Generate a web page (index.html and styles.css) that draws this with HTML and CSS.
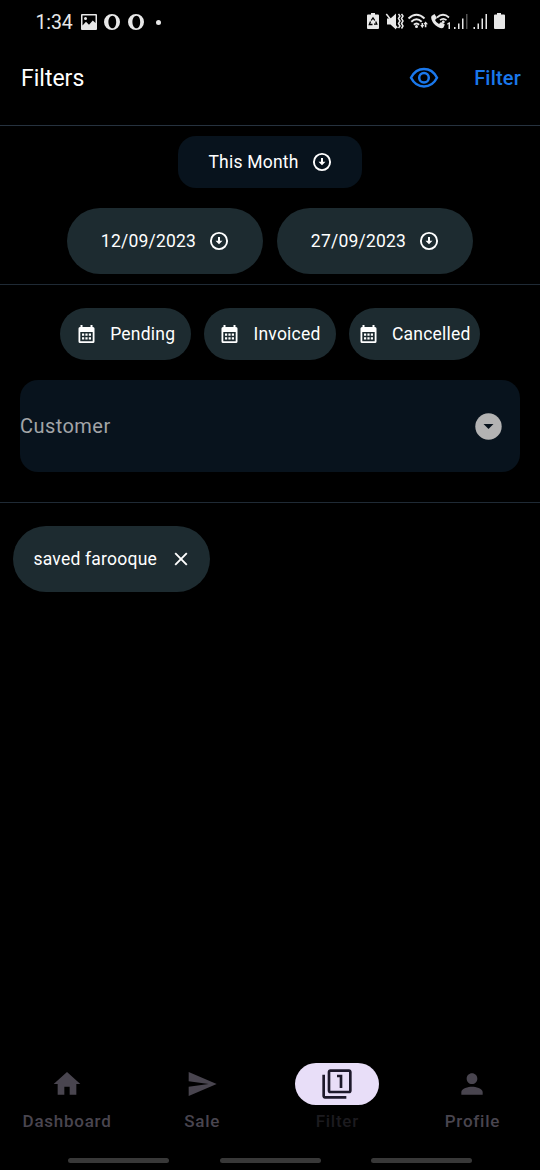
FILE: index.html
```html
<!DOCTYPE html>
<html lang="en">
<head>
<meta charset="utf-8">
<title>Filters</title>
<link rel="stylesheet" href="styles.css">
</head>
<body>
<svg class="defs" width="0" height="0">
  <symbol id="down" viewBox="0 0 20 20"><circle cx="10" cy="10" r="8.100" fill="none" stroke="currentColor" stroke-width="1.900"/><path d="M9 6h2v3.700h2.500L10 13.300 6.500 9.700H9z" fill="currentColor"/></symbol>
  <symbol id="calendar" viewBox="0 0 18 20"><path fill="currentColor" fill-rule="evenodd" d="M3 1h2v2h8V1h2v2h.5A1.500 1.500 0 0 1 17 4.500v13a1.500 1.500 0 0 1-1.500 1.500h-13A1.500 1.500 0 0 1 1 17.500v-13A1.500 1.500 0 0 1 2.500 3H3zM2.800 8v9.200h12.400V8z"/><path fill="currentColor" d="M4.500 9.500h2.200v2.200H4.500zM7.900 9.500h2.200v2.200H7.900zM11.300 9.500h2.200v2.200h-2.200zM4.500 13.200h2.200v2.200H4.500zM7.900 13.200h2.200v2.200H7.900zM11.300 13.200h2.200v2.200h-2.200z"/></symbol>
  <symbol id="opera" viewBox="0 0 16 16"><path fill="currentColor" fill-rule="evenodd" d="M8 0a8 8 0 1 0 0 16A8 8 0 1 0 8 0zM8.500 1.700c2.300 0 3.700 2.800 3.700 6.300s-1.400 6.300-3.700 6.300S4.400 11.500 4.400 8s1.800-6.300 4.100-6.300z"/></symbol>
</svg>
<div class="screen">
  <div class="status">
    <span class="time">1:34</span>
    <svg class="s-image" width="16" height="16" viewBox="0 0 16 16"><path fill="currentColor" fill-rule="evenodd" d="M1 0h14a1 1 0 0 1 1 1v14a1 1 0 0 1-1 1H1a1 1 0 0 1-1-1V1a1 1 0 0 1 1-1zM1.500 1.500v10L5 7.800l3 3 3.800-4.300 2.700 2.500V1.500zM4.500 3a1.500 1.500 0 1 1 0 3 1.500 1.500 0 0 1 0-3z"/></svg>
    <svg class="s-opera" width="16" height="16"><use href="#opera"/></svg>
    <svg class="s-opera" width="16" height="16"><use href="#opera"/></svg>
    <span class="dot"></span>
    <svg class="s-right" width="140" height="18" viewBox="0 0 140 18" fill="currentColor">
      <path d="M4 0h4v1.500h3a1 1 0 0 1 1 1V15a1 1 0 0 1-1 1H1a1 1 0 0 1-1-1V2.500a1 1 0 0 1 1-1h3z"/>
      <path d="M4.200 7.500 6 4.800l1.800 2.700M8.700 8.500l1.100 2.700H7M5.500 11.500H2.300l1.200-3" fill="none" stroke="#000" stroke-width="1.300"/>
      <path d="M20 5.500h3.500l5.500-5v16l-5.500-5H20z"/><path d="m19.300 1 11 14" stroke="currentColor" stroke-width="1.500"/>
      <path d="m31.500 1 1.500 2-1.500 2.500L33 8l-1.500 2.500L33 13l-1.500 2M34.500 1 36 3l-1.500 2.500L36 8l-1.500 2.500L36 13l-1.500 2.500" fill="none" stroke="currentColor" stroke-width="1.500"/>
      <g fill="none" stroke="currentColor" stroke-width="1.900"><path d="M41.500 5.500q8-7.500 16 0M44.300 8.800q5.200-5 10.400 0M46.900 11.700q2.600-2.500 5.200 0"/></g>
      <circle cx="49.500" cy="13.500" r="1.500"/><path d="M53.300 12h1.200v-2h1.500v2h1.200l-1.900 3.200zM58.600 8.500 61 11.300h-1.600v3h-1.600v-3h-1.500z"/>
      <path d="M64.500 3 67.500 1 70 5l-2 2q1 2.700 4 4l2-2 3.800 2.600-1.300 2.900q-1.500 1.600-5.500-.5-5-3-6.500-7.500-.7-2.500 0-3.500z"/>
      <path d="M70 4.500q6-5.500 12 0M73 7.200q3.300-2.700 6.500 0" fill="none" stroke="currentColor" stroke-width="1.700"/><circle cx="76.300" cy="9" r="1.400"/><path d="m80.200 10.500 2-1.200h.8V16h-1.500v-5l-1.300.7z"/>
      <path d="M87 14h1.500v2H87zM91 10.500h1.500V16H91zM95 5.500h1.500V16H95zM106.500 14h1.500v2h-1.500zM110.500 10.500h1.500V16h-1.500zM114.500 5.500h1.500V16h-1.500zM118.500 1h1.500v15h-1.500z"/><path d="M99 1h1.500v15H99z" opacity=".35"/>
      <path d="M130 0h4v1.500h3a1 1 0 0 1 1 1V15a1 1 0 0 1-1 1h-9a1 1 0 0 1-1-1V2.500a1 1 0 0 1 1-1h2z"/>
    </svg>
  </div>
  <header class="header">
    <h1>Filters</h1>
    <svg class="eye" width="30" height="22" viewBox="0 0 30 22" fill="none" stroke="currentColor"><path d="M2 10.700Q6.500 2 15 2t13 8.700Q23.500 19.400 15 19.400T2 10.700z" stroke-width="2.500"/><circle cx="15" cy="10.700" r="4.800" stroke-width="2.500"/></svg>
    <span class="apply">Filter</span>
  </header>
  <section class="period">
    <div class="chip month"><span>This Month</span><svg width="20" height="20"><use href="#down"/></svg></div>
    <div class="dates">
      <div class="chip date"><span>12/09/2023</span><svg width="20" height="20"><use href="#down"/></svg></div>
      <div class="chip date"><span>27/09/2023</span><svg width="20" height="20"><use href="#down"/></svg></div>
    </div>
  </section>
  <section class="criteria">
    <div class="states">
      <div class="chip state"><svg width="19" height="20"><use href="#calendar"/></svg><span>Pending</span></div>
      <div class="chip state"><svg width="19" height="20"><use href="#calendar"/></svg><span>Invoiced</span></div>
      <div class="chip state"><svg width="19" height="20"><use href="#calendar"/></svg><span>Cancelled</span></div>
    </div>
    <div class="customer"><span>Customer</span><svg width="27" height="27" viewBox="0 0 27 27"><circle cx="13.500" cy="13.500" r="13.200" fill="#b3b3b3"/><path d="M8.500 11h10l-5 5z" fill="#08131d"/></svg></div>
  </section>
  <main class="results">
    <div class="chip saved"><span>saved farooque</span><svg width="14" height="14" viewBox="0 0 14 14"><path d="m1.200 1.200 11.600 11.600m0-11.600L1.200 12.800" stroke="currentColor" stroke-width="1.900"/></svg></div>
  </main>
  <nav class="nav">
    <div class="tab"><div class="pill"><svg width="32" height="32" viewBox="0 0 24 24"><path fill="currentColor" d="M10 20v-6h4v6h5v-8h3L12 3 2 12h3v8z"/></svg></div><span>Dashboard</span></div>
    <div class="tab"><div class="pill"><svg width="32" height="32" viewBox="0 0 24 24"><path fill="currentColor" d="M2.010 21 23 12 2.010 3 2 10l15 2-15 2z"/></svg></div><span>Sale</span></div>
    <div class="tab active"><div class="pill"><svg width="32" height="32" viewBox="0 0 24 24"><path fill="currentColor" d="M3 5H1v16c0 1.100.9 2 2 2h16v-2H3V5zm11 10h2V5h-4v2h2v8zm7-14H7c-1.100 0-2 .9-2 2v14c0 1.100.9 2 2 2h14c1.100 0 2-.9 2-2V3c0-1.100-.9-2-2-2zm0 16H7V3h14v14z"/></svg></div><span>Filter</span></div>
    <div class="tab"><div class="pill"><svg width="32" height="32" viewBox="0 0 24 24"><path fill="currentColor" d="M12 12c2.210 0 4-1.790 4-4s-1.790-4-4-4-4 1.790-4 4 1.790 4 4 4zm0 2c-2.670 0-8 1.340-8 4v2h16v-2c0-2.660-5.330-4-8-4z"/></svg></div><span>Profile</span></div>
  </nav>
  <div class="gestures"><i></i><i></i><i></i></div>
</div>
</body>
</html>
```

FILE: styles.css
```css
* { box-sizing: border-box; }
body { margin: 0; background: #000; font-family: Roboto, sans-serif; color: #fff; }
svg { display: block; flex: none; }
.defs { position: absolute; }
.screen { width: 540px; height: 1170px; display: flex; flex-direction: column; overflow: hidden; }

.status { height: 44px; display: flex; align-items: center; padding: 0 32px 0 35.500px; color: #e8e8e8; }
.time { width: 45px; padding-top: 1px; font-size: 19.500px; line-height: 24px; letter-spacing: -.1px; }
.s-image { margin-right: 7.500px; }
.s-opera { margin-right: 7.500px; }
.dot { width: 5px; height: 5px; margin-left: 5px; border-radius: 50%; background: #e8e8e8; }
.s-right { margin-left: auto; margin-right: 1px; }

.header { height: 82px; display: flex; align-items: center; padding: 0 19px 13px 21px; border-bottom: 1px solid #26323f; }
.header h1 { margin: 0; padding-top: 2px; font-size: 23px; line-height: 28px; font-weight: 400; }
.eye { margin-left: auto; margin-right: 35px; color: #1a78ec; }
.apply { font-size: 20px; font-weight: 500; letter-spacing: .2px; color: #1a78ec; }

.chip { display: flex; align-items: center; justify-content: center; font-size: 17.500px; line-height: 22px; letter-spacing: .22px; background: #1d2b30; white-space: nowrap; }
.period { height: 159px; padding-top: 10px; border-bottom: 1px solid #1f2a35; display: flex; flex-direction: column; align-items: center; gap: 20px; }
.month { width: 184px; height: 52px; border-radius: 18px; gap: 13px; background: #08131d; }
.dates { display: flex; gap: 13.500px; }
.date { width: 196.500px; height: 65.500px; border-radius: 33px; gap: 13px; }

.criteria { height: 218px; padding: 23px 20px 0; border-bottom: 1px solid #1f2a35; }
.states { display: flex; justify-content: center; gap: 13px; }
.state { width: 131.300px; height: 52px; border-radius: 26px; gap: 14px; padding-left: 1px; }
.customer { height: 92px; margin-top: 20px; padding-right: 18px; border-radius: 18px; background: #08131d; display: flex; align-items: center; justify-content: space-between; font-size: 20px; letter-spacing: .45px; color: #a3a5a8; }

.results { flex: 1; padding: 23px 13px; }
.saved { width: 197px; height: 65.500px; border-radius: 33px; gap: 16.500px; padding-right: 2px; }

.nav { display: flex; height: 87.500px; margin-left: -.5px; }
.tab { flex: 1; display: flex; flex-direction: column; align-items: center; gap: 6.500px; color: #49454f; font-size: 17px; line-height: 21px; font-weight: 500; letter-spacing: .75px; }
.pill { width: 84px; height: 42px; border-radius: 21px; display: flex; align-items: center; justify-content: center; }
.active .pill { background: #e8def8; color: #1d192b; }
.active { color: #1c1b1f; }
.gestures { height: 20px; padding: 8px 68px 0; display: flex; justify-content: space-between; }
.gestures i { width: 101px; height: 5px; border-radius: 3px; background: #383838; }
```
